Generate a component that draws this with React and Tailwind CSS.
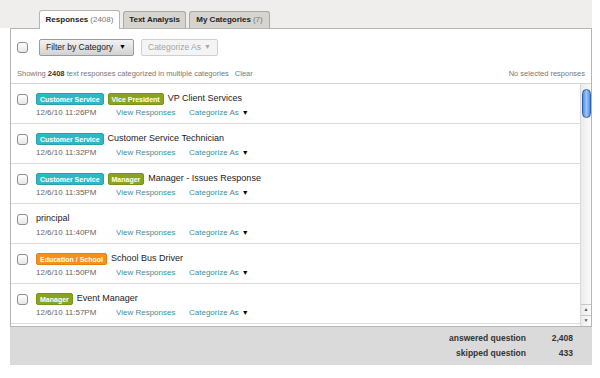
import React from 'react';

const rows = [
  { tags: [['Customer Service', 'teal'], ['Vice President', 'olive']], title: 'VP Client Services', time: '12/6/10 11:26PM' },
  { tags: [['Customer Service', 'teal']], title: 'Customer Service Technician', time: '12/6/10 11:32PM' },
  { tags: [['Customer Service', 'teal'], ['Manager', 'olive']], title: 'Manager - Issues Response', time: '12/6/10 11:35PM' },
  { tags: [], title: 'principal', time: '12/6/10 11:40PM' },
  { tags: [['Education / School', 'orange']], title: 'School Bus Driver', time: '12/6/10 11:50PM' },
  { tags: [['Manager', 'olive']], title: 'Event Manager', time: '12/6/10 11:57PM' },
];

const tagColors = {
  teal: 'bg-[#2fb8c4] border-[#27a3ae]',
  olive: 'bg-[#8aa41e] border-[#7a9318]',
  orange: 'bg-[#f7901e] border-[#e8800f]',
};

function Checkbox() {
  return (
    <span className="block w-[11px] h-[11px] rounded-[3px] border border-[#8e8e8e] bg-gradient-to-b from-white to-[#e6e6e6] shrink-0" />
  );
}

function Tag({ label, color }) {
  return (
    <span className={`inline-flex items-center h-[12px] px-[3px] rounded-[2px] border text-white font-bold text-[7px] leading-none ${tagColors[color]}`}>
      {label}
    </span>
  );
}

function Row({ row }) {
  return (
    <div className="flex h-[40px] border-b border-[#dcdcdc] pl-[6px]">
      <div className="pt-[10px]">
        <Checkbox />
      </div>
      <div className="pl-[8px] pt-[9px]">
        <div className="flex items-center gap-[4px] h-[12px]">
          {row.tags.map(([label, color]) => (
            <Tag key={label} label={label} color={color} />
          ))}
          <span className="text-[9px] text-[#222]">{row.title}</span>
        </div>
        <div className="flex items-center h-[14px] mt-[1px] text-[8px]">
          <span className="w-[80px] text-[#666]">{row.time}</span>
          <span className="w-[73px] text-[#3f8e97]">View Responses</span>
          <span className="text-[#3f8e97]">Categorize As</span>
          <span className="ml-[3px] text-[7px] text-black">▼</span>
        </div>
      </div>
    </div>
  );
}

export default function App() {
  return (
    <div className="w-[600px] h-[378px] bg-white overflow-hidden" style={{ fontFamily: '"Liberation Sans", Arial, sans-serif' }}>
      <div className="w-[592px]">
        {/* tab strip */}
        <div className="h-[28px] bg-[#efeeec] flex items-end pl-[39px] gap-[3px]">
          <div className="relative top-[1px] h-[19px] w-[81px] bg-white border border-b-0 border-[#b5b5b5] rounded-t-[3px] flex items-center justify-center text-[8px]">
            <span className="font-bold text-[#222]">Responses</span>
            <span className="ml-[2px] text-[#777]">(2408)</span>
          </div>
          <div className="h-[17px] w-[63px] bg-[#d6d4cf] border border-b-0 border-[#aaa8a3] rounded-t-[3px] flex items-center justify-center text-[8px] font-bold text-[#222]">
            Text Analysis
          </div>
          <div className="h-[17px] w-[81px] bg-[#d6d4cf] border border-b-0 border-[#aaa8a3] rounded-t-[3px] flex items-center justify-center text-[8px]">
            <span className="font-bold text-[#222]">My Categories</span>
            <span className="ml-[2px] text-[#777]">(7)</span>
          </div>
        </div>

        {/* panel */}
        <div className="ml-[10px] border border-[#b5b5b5] bg-white">
          <div className="h-[55px] border-b border-[#d4d4d4]">
            <div className="flex items-center h-[36px] pl-[6px]">
              <Checkbox />
              <div className="ml-[11px] h-[17px] w-[95px] border border-[#9a9a9a] rounded-[2px] bg-gradient-to-b from-[#f2f2f2] to-[#d2d2d2] flex items-center pl-[6px] text-[8.5px] text-[#222]">
                Filter by Category
                <span className="ml-[6px] text-[7px] text-black">▼</span>
              </div>
              <div className="ml-[7px] h-[17px] w-[77px] border border-[#cfcfcf] rounded-[2px] bg-[#f4f4f4] flex items-center pl-[6px] text-[8.5px] text-[#a5a5a5]">
                Categorize As
                <span className="ml-[3px] text-[7px]">▼</span>
              </div>
            </div>
            <div className="flex items-center justify-between pl-[6px] pr-[6px] h-[17px] text-[7.5px] text-[#777]">
              <span>
                Showing <b className="text-[#333]">2408</b> text responses categorized in multiple categories
                <span className="ml-[6px] text-[#3f8e97]">Clear</span>
              </span>
              <span>No selected responses</span>
            </div>
          </div>

          <div className="flex h-[242px]">
            <div className="flex-1">
              {rows.map((r) => (
                <Row key={r.time} row={r} />
              ))}
            </div>
            {/* scrollbar */}
            <div className="w-[11px] border-l border-[#d8d8d8] bg-gradient-to-r from-[#ececec] to-[#fafafa] flex flex-col items-center">
              <div className="mt-[5px] w-[9px] h-[29px] rounded-full border border-[#2f5fb0] bg-gradient-to-r from-[#4f8fe6] via-[#9cc6f5] to-[#4f8fe6]" />
              <div className="flex-1" />
              <div className="w-full h-[11px] border-t border-[#c8c8c8] flex items-center justify-center text-[5px] text-[#555]">▲</div>
              <div className="w-full h-[11px] border-t border-[#c8c8c8] flex items-center justify-center text-[5px] text-[#555]">▼</div>
            </div>
          </div>
        </div>

        {/* footer */}
        <div className="ml-[10px] h-[38px] bg-[#dadada] pt-[4px] text-[8.5px] font-bold text-[#333]">
          <div className="flex justify-end h-[15px] items-center">
            <span>answered question</span>
            <span className="w-[66px] pr-[19px] text-right">2,408</span>
          </div>
          <div className="flex justify-end h-[15px] items-center">
            <span>skipped question</span>
            <span className="w-[66px] pr-[19px] text-right">433</span>
          </div>
        </div>
      </div>
    </div>
  );
}
